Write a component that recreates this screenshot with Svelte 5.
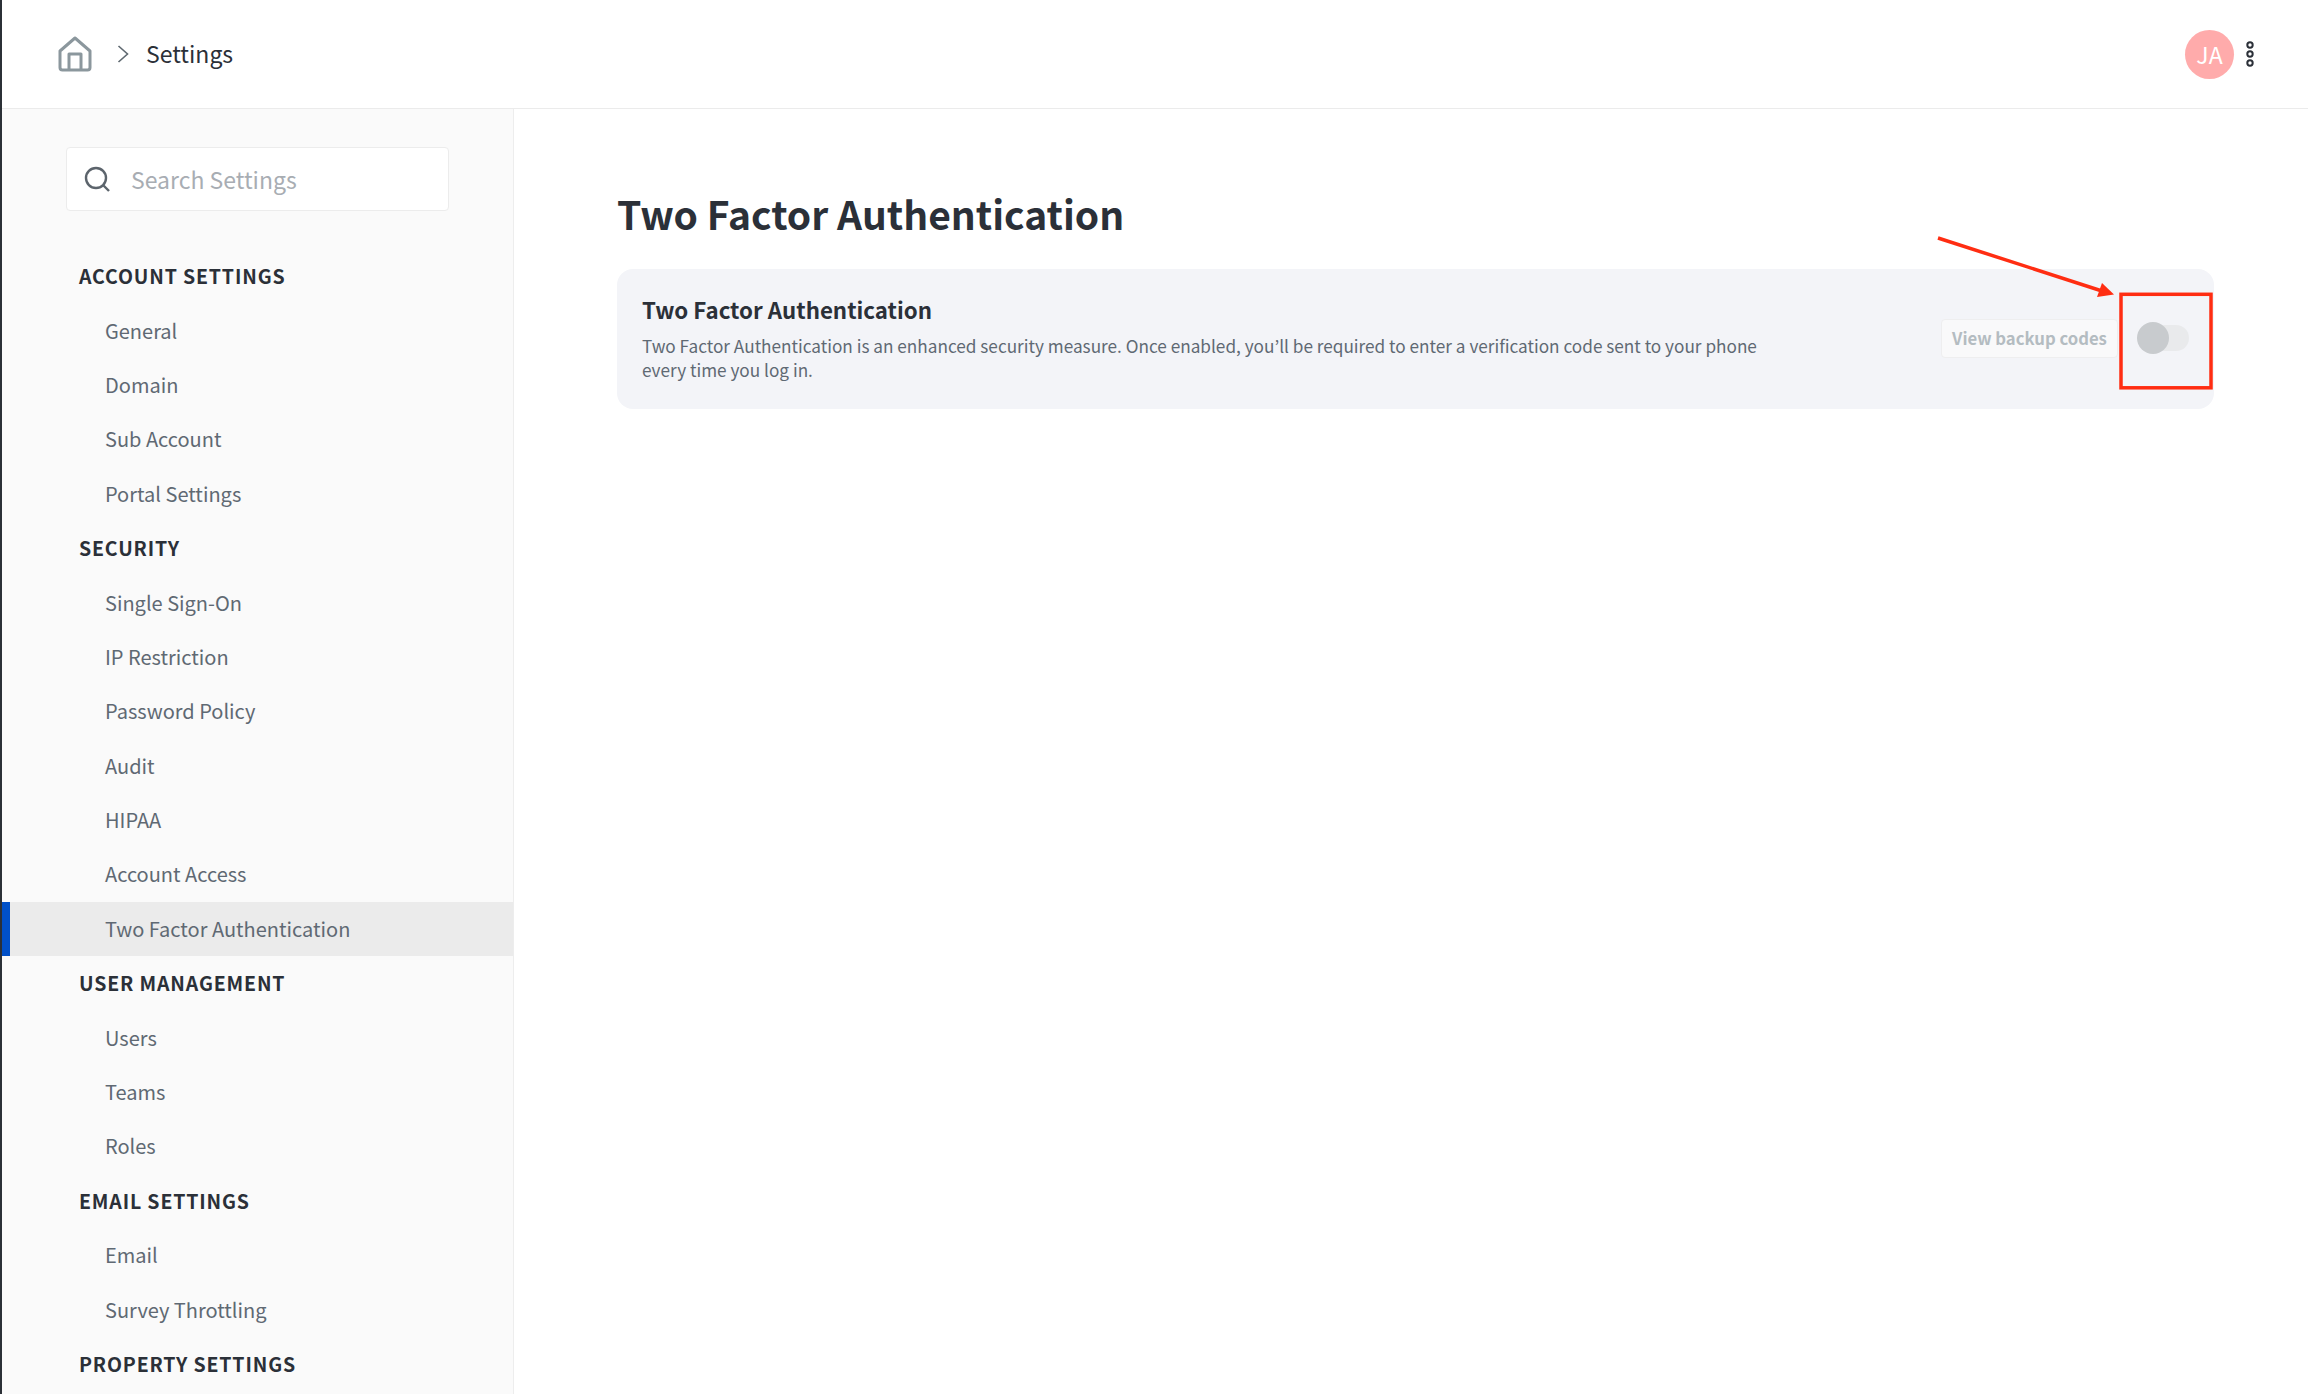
<script>
  const sections = [
    { title: 'ACCOUNT SETTINGS', items: ['General', 'Domain', 'Sub Account', 'Portal Settings'] },
    { title: 'SECURITY', items: ['Single Sign-On', 'IP Restriction', 'Password Policy', 'Audit', 'HIPAA', 'Account Access', 'Two Factor Authentication'] },
    { title: 'USER MANAGEMENT', items: ['Users', 'Teams', 'Roles'] },
    { title: 'EMAIL SETTINGS', items: ['Email', 'Survey Throttling'] },
    { title: 'PROPERTY SETTINGS', items: [] }
  ];
  const active = 'Two Factor Authentication';
</script>

<div class="page">
  <header class="topbar">
    <div class="crumbs">
      <svg class="home" width="34" height="36" viewBox="0 0 34 36" fill="none" stroke="#8b979d" stroke-width="3" stroke-linejoin="round">
        <path d="M17 2 L32 15 V31.5 Q32 34 29.5 34 H4.5 Q2 34 2 31.5 V15 Z" />
        <path d="M11 34 V18 H23 V34" />
      </svg>
      <svg class="chev" width="12" height="18" viewBox="0 0 12 18" fill="none" stroke="#5f6971" stroke-width="1.6">
        <path d="M1.5 1 L10.5 9 L1.5 17" />
      </svg>
      <span class="crumb">Settings</span>
    </div>
    <div class="user">
      <div class="avatar">JA</div>
      <svg width="10" height="26" viewBox="0 0 10 26" fill="none" stroke="#2b3038" stroke-width="2">
        <circle cx="5" cy="4" r="2.7" /><circle cx="5" cy="13" r="2.7" /><circle cx="5" cy="22" r="2.7" />
      </svg>
    </div>
  </header>

  <div class="body">
    <aside class="sidebar">
      <div class="search">
        <svg width="26" height="26" viewBox="0 0 26 26" fill="none" stroke="#5c646c" stroke-width="2.4">
          <circle cx="12" cy="12" r="10" /><path d="M19 19 L25 25" />
        </svg>
        <span class="placeholder">Search Settings</span>
      </div>
      <nav class="nav">
        {#each sections as s}
          <div class="section">{s.title}</div>
          {#each s.items as item}
            <div class="item" class:active={item === active}>{item}</div>
          {/each}
        {/each}
      </nav>
    </aside>

    <main class="main">
      <h1>Two Factor Authentication</h1>
      <section class="card">
        <div class="text">
          <h2>Two Factor Authentication</h2>
          <p>Two Factor Authentication is an enhanced security measure. Once enabled, you’ll be required to enter a verification code sent to your phone every time you log in.</p>
        </div>
        <div class="actions">
          <button class="backup">View backup codes</button>
          <div class="toggle"><span class="knob"></span></div>
        </div>
      </section>
    </main>
  </div>

  <svg class="annotation" width="2308" height="1394" viewBox="0 0 2308 1394" fill="none">
    <path d="M1938 238 L2102 291" stroke="#ff2d12" stroke-width="3.5" />
    <path d="M2114 294.5 L2102 283 L2097 297 Z" fill="#ff2d12" />
    <rect x="2121" y="294.3" width="90" height="93.5" stroke="#ff2d12" stroke-width="3.5" />
  </svg>
</div>

<style>
  :global(body) {
    margin: 0;
    background: #fff;
  }
  .page {
    position: relative;
    width: 2308px;
    height: 1394px;
    overflow: hidden;
    box-sizing: border-box;
    border-left: 2px solid #2b3036;
    display: flex;
    flex-direction: column;
    font-family: "Noto Sans CJK KR", "Noto Sans", sans-serif;
    color: #2b3038;
  }
  .topbar {
    flex: none;
    height: 109px;
    box-sizing: border-box;
    border-bottom: 1px solid #ebebeb;
    display: flex;
    align-items: center;
    justify-content: space-between;
    padding: 0 53px 0 56px;
  }
  .crumbs {
    display: flex;
    align-items: center;
  }
  .chev {
    margin-left: 25px;
  }
  .crumb {
    margin-left: 17px;
    margin-top: -3px;
    font-size: 23px;
    line-height: 32px;
  }
  .user {
    display: flex;
    align-items: center;
    gap: 11px;
  }
  .avatar {
    width: 49px;
    height: 49px;
    border-radius: 50%;
    background: #ffabab;
    color: #fff;
    font-size: 23px;
    line-height: 48px;
    text-align: center;
  }
  .body {
    flex: 1;
    display: flex;
    min-height: 0;
  }
  .sidebar {
    flex: none;
    width: 512px;
    box-sizing: border-box;
    background: #fafafa;
    border-right: 1px solid #ededed;
    padding-top: 38px;
  }
  .search {
    margin-left: 64px;
    width: 383px;
    height: 64px;
    box-sizing: border-box;
    background: #fff;
    border: 1px solid #ececec;
    border-radius: 4px;
    display: flex;
    align-items: center;
    padding-left: 17px;
    gap: 21px;
  }
  .placeholder {
    color: #a8adb3;
    font-size: 23px;
    line-height: 30px;
    margin-top: -1px;
  }
  .nav {
    margin-top: 38.2px;
  }
  .section, .item {
    height: 54.4px;
    line-height: 54.4px;
    white-space: nowrap;
  }
  .section {
    padding-left: 77px;
    font-size: 19.5px;
    font-weight: 600;
    letter-spacing: 0.85px;
    color: #2b3038;
  }
  .item {
    padding-left: 103px;
    font-size: 20px;
    color: #5f6973;
  }
  .item.active {
    background: #ebebeb;
    box-shadow: inset 8px 0 0 #0050c8;
  }
  .main {
    flex: 1;
    min-width: 0;
    background: #fff;
    padding: 0 94px 0 103px;
  }
  h1 {
    margin: 0;
    padding-top: 76px;
    font-size: 39px;
    line-height: 56px;
    font-weight: 600;
    color: #2b3038;
  }
  .card {
    margin-top: 28px;
    height: 140px;
    box-sizing: border-box;
    background: #f3f4f8;
    border-radius: 16px;
    padding: 24px 25px 0 25px;
    display: flex;
    justify-content: space-between;
  }
  .text {
    width: 1130px;
  }
  h2 {
    margin: 0;
    font-size: 22.3px;
    line-height: 33px;
    font-weight: 600;
    color: #2b3038;
  }
  p {
    margin: 8px 0 0;
    font-size: 17.2px;
    line-height: 24px;
    color: #5f6973;
  }
  .actions {
    display: flex;
    align-items: center;
    height: 90px;
  }
  .backup {
    width: 177px;
    height: 39px;
    box-sizing: border-box;
    background: #f9f9fa;
    border: 1px solid #eeeeef;
    border-radius: 4px;
    color: #b4bcc1;
    font-family: inherit;
    font-size: 16.7px;
    font-weight: 600;
    line-height: 24px;
    padding: 0;
  }
  .toggle {
    position: relative;
    margin-left: 20px;
    width: 51px;
    height: 26px;
    background: #e9eaec;
    border-radius: 13px;
  }
  .knob {
    position: absolute;
    left: -1px;
    top: -3px;
    width: 32px;
    height: 32px;
    border-radius: 50%;
    background: #c8cbce;
  }
  .annotation {
    position: absolute;
    left: -2px;
    top: 0;
    pointer-events: none;
  }
</style>
